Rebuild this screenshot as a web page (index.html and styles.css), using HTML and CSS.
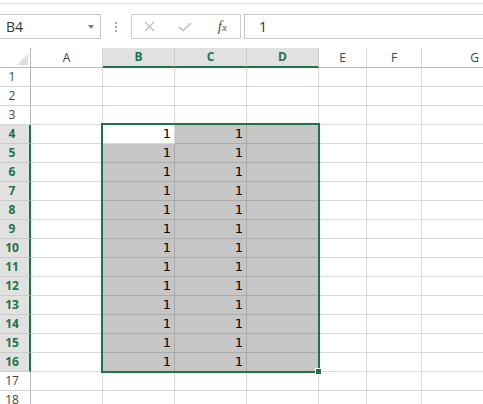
FILE: index.html
```html
<!DOCTYPE html>
<html>
<head>
<meta charset="utf-8">
<link rel="stylesheet" href="styles.css">
</head>
<body>
<div class="app">
  <div class="topline"></div>
  <div class="fbar">
    <div class="namebox"><span>B4</span><span class="arrow"></span></div>
    <div class="grip"><i></i><i></i><i></i></div>
    <div class="btns">
      <div class="btn"><svg width="11" height="11" viewBox="0 0 11 11"><path d="M1 1L10 10M10 1L1 10" stroke="#bdbdbd" stroke-width="1.3" fill="none"/></svg></div>
      <div class="btn"><svg width="14" height="10" viewBox="0 0 14 10"><path d="M1 5L5 8.6L13 1.2" stroke="#c6c6c6" stroke-width="1.8" fill="none"/></svg></div>
      <div class="btn fx"><i>f</i><sub>x</sub></div>
    </div>
    <div class="formula">1</div>
  </div>
  <div class="sheet">
    <div class="corner"><span class="tri"></span></div><div class="ch">A</div><div class="ch sel">B</div><div class="ch sel">C</div><div class="ch sel">D</div><div class="ch">E</div><div class="ch">F</div><div class="ch">G</div>

    <div class="rh">1</div><div class="c"></div><div class="c"></div><div class="c"></div><div class="c"></div><div class="c"></div><div class="c"></div><div class="c"></div>
    <div class="rh">2</div><div class="c"></div><div class="c"></div><div class="c"></div><div class="c"></div><div class="c"></div><div class="c"></div><div class="c"></div>
    <div class="rh">3</div><div class="c"></div><div class="c"></div><div class="c"></div><div class="c"></div><div class="c"></div><div class="c"></div><div class="c"></div>
    <div class="rh sel">4</div><div class="c"></div><div class="c num">1</div><div class="c num hl">1</div><div class="c hl"></div><div class="c"></div><div class="c"></div><div class="c"></div>
    <div class="rh sel">5</div><div class="c"></div><div class="c num hl">1</div><div class="c num hl">1</div><div class="c hl"></div><div class="c"></div><div class="c"></div><div class="c"></div>
    <div class="rh sel">6</div><div class="c"></div><div class="c num hl">1</div><div class="c num hl">1</div><div class="c hl"></div><div class="c"></div><div class="c"></div><div class="c"></div>
    <div class="rh sel">7</div><div class="c"></div><div class="c num hl">1</div><div class="c num hl">1</div><div class="c hl"></div><div class="c"></div><div class="c"></div><div class="c"></div>
    <div class="rh sel">8</div><div class="c"></div><div class="c num hl">1</div><div class="c num hl">1</div><div class="c hl"></div><div class="c"></div><div class="c"></div><div class="c"></div>
    <div class="rh sel">9</div><div class="c"></div><div class="c num hl">1</div><div class="c num hl">1</div><div class="c hl"></div><div class="c"></div><div class="c"></div><div class="c"></div>
    <div class="rh sel">10</div><div class="c"></div><div class="c num hl">1</div><div class="c num hl">1</div><div class="c hl"></div><div class="c"></div><div class="c"></div><div class="c"></div>
    <div class="rh sel">11</div><div class="c"></div><div class="c num hl">1</div><div class="c num hl">1</div><div class="c hl"></div><div class="c"></div><div class="c"></div><div class="c"></div>
    <div class="rh sel">12</div><div class="c"></div><div class="c num hl">1</div><div class="c num hl">1</div><div class="c hl"></div><div class="c"></div><div class="c"></div><div class="c"></div>
    <div class="rh sel">13</div><div class="c"></div><div class="c num hl">1</div><div class="c num hl">1</div><div class="c hl"></div><div class="c"></div><div class="c"></div><div class="c"></div>
    <div class="rh sel">14</div><div class="c"></div><div class="c num hl">1</div><div class="c num hl">1</div><div class="c hl"></div><div class="c"></div><div class="c"></div><div class="c"></div>
    <div class="rh sel">15</div><div class="c"></div><div class="c num hl">1</div><div class="c num hl">1</div><div class="c hl"></div><div class="c"></div><div class="c"></div><div class="c"></div>
    <div class="rh sel">16</div><div class="c"></div><div class="c num hl">1</div><div class="c num hl">1</div><div class="c hl"></div><div class="c"></div><div class="c"></div><div class="c"></div>
    <div class="rh">17</div><div class="c"></div><div class="c"></div><div class="c"></div><div class="c"></div><div class="c"></div><div class="c"></div><div class="c"></div>
    <div class="rh">18</div><div class="c"></div><div class="c"></div><div class="c"></div><div class="c"></div><div class="c"></div><div class="c"></div><div class="c"></div>

    <div class="selection"><span class="handle"></span></div>
  </div>
</div>
</body>
</html>
```

FILE: styles.css
```css
* { box-sizing: border-box; }
html, body {
  margin: 0;
  height: 404px;
  overflow: hidden;
  background: #fff;
}
body {
  font-family: "Open Sans", "Noto Sans", sans-serif;
  color: #333;
}
.app {
  width: 483px;
  height: 404px;
  overflow: hidden;
}
.topline {
  height: 4px;
  border-bottom: 1px solid #d9d9d9;
}
.fbar {
  display: flex;
  height: 25px;
  margin-top: 10px;
}
.namebox {
  width: 101px;
  flex: none;
  border: 1px solid #c6c6c6;
  border-left: none;
  display: flex;
  align-items: center;
  justify-content: space-between;
  padding: 0 6px 0 6px;
  font-size: 14px;
  color: #333;
}
.arrow {
  width: 0;
  height: 0;
  border-left: 3.5px solid transparent;
  border-right: 3.5px solid transparent;
  border-top: 4px solid #7a7a7a;
}
.grip {
  width: 30px;
  flex: none;
  display: flex;
  flex-direction: column;
  align-items: center;
  justify-content: center;
  gap: 2px;
}
.grip i {
  width: 2px;
  height: 2px;
  background: #a9a9a9;
}
.btns {
  width: 110px;
  flex: none;
  border: 1px solid #d0d0d0;
  display: flex;
}
.btn {
  flex: 1;
  display: flex;
  align-items: center;
  justify-content: center;
}
.fx {
  font-family: "Liberation Serif", serif;
  font-size: 15px;
  color: #555;
  padding-left: 2px;
}
.fx sub {
  font-style: italic;
  font-size: 11px;
  vertical-align: -1px;
}
.formula {
  flex: 1;
  margin-left: 3px;
  border: 1px solid #c6c6c6;
  border-right: none;
  padding-left: 14px;
  display: flex;
  align-items: center;
  font-size: 14px;
  color: #333;
}
.sheet {
  position: relative;
  margin-top: 9px;
  display: grid;
  grid-template-columns: 31px 72px 72px 72px 72px 48px 55px 106px;
  grid-template-rows: 20px;
  grid-auto-rows: 19px;
  width: 528px;
}
.corner {
  border-right: 1px solid #b8b8b8;
  border-bottom: 1px solid #b8b8b8;
  display: flex;
  justify-content: flex-end;
  align-items: flex-end;
  padding: 0 2px 2px 0;
}
.tri {
  width: 0;
  height: 0;
  border-left: 11px solid transparent;
  border-bottom: 11px solid #dedede;
}
.ch {
  border-right: 1px solid #d6d6d6;
  border-bottom: 1px solid #b8b8b8;
  font-size: 12px;
  line-height: 19px;
  text-align: center;
  color: #444;
}
.ch.sel {
  background: #e1e1e1;
  border-right-color: #c8c8c8;
  border-bottom: 2px solid #217346;
  color: #217346;
  font-weight: bold;
  line-height: 18px;
}
.rh {
  border-right: 1px solid #b8b8b8;
  border-bottom: 1px solid #d6d6d6;
  font-size: 12px;
  line-height: 18px;
  text-align: center;
  padding-right: 6px;
  color: #444;
}
.rh.sel {
  background: #e1e1e1;
  border-right: 2px solid #217346;
  border-bottom-color: #cbcbcb;
  padding-right: 5px;
  color: #217346;
  font-weight: bold;
}
.c {
  border-right: 1px solid #dadada;
  border-bottom: 1px solid #dadada;
}
.num {
  font-family: "DejaVu Sans", sans-serif;
  font-size: 13px;
  line-height: 18px;
  text-align: right;
  padding-right: 3px;
  color: #000;
}
.hl {
  background: #c6c6c6;
  border-color: #ababab;
}
.selection {
  grid-area: 5 / 3 / 18 / 6;
  position: absolute;
  top: -2px;
  left: -2px;
  right: -1px;
  bottom: -1px;
  border: 2px solid #217346;
  pointer-events: none;
}
.handle {
  position: absolute;
  right: -4px;
  bottom: -4px;
  width: 7px;
  height: 7px;
  background: #217346;
  border: 1px solid #fff;
}
```
